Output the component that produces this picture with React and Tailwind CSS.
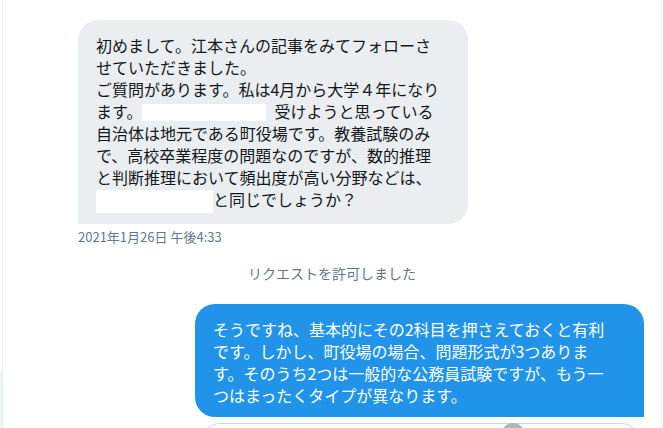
const FONT = { fontFamily: '"Noto Sans CJK JP", "Noto Sans", sans-serif' };

const received = [
  '初めまして。江本さんの記事をみてフォローさ',
  'せていただきました。',
  'ご質問があります。私は4月から大学４年になり',
];

const received2 = [
  '自治体は地元である町役場です。教養試験のみ',
  'で、高校卒業程度の問題なのですが、数的推理',
  'と判断推理において頻出度が高い分野などは、',
];

const sent = [
  'そうですね、基本的にその2科目を押さえておくと有利',
  'です。しかし、町役場の場合、問題形式が3つありま',
  'す。そのうち2つは一般的な公務員試験ですが、もう一',
  'つはまったくタイプが異なります。',
];

function Line({ children }) {
  return <div className="whitespace-nowrap h-[22px] leading-[22px]">{children}</div>;
}

export default function App() {
  return (
    <div className="flex w-[663px] h-[428px] overflow-hidden bg-white" style={FONT}>
      <div className="w-[2px] flex flex-col">
        <div className="flex-1" />
        <div className="h-[56px] bg-[#f3f5f7]" />
      </div>
      <div className="flex-1 flex flex-col border-l border-r border-[#e6ecf0] min-w-0">
        <div className="mt-[2px] ml-[17px] mr-[19px] h-px bg-[#e3e8ec] shadow-[0_1px_1px_rgba(0,0,0,0.06)]" />

        <div className="mt-[18px] ml-[75px] w-[390px] bg-[#eaeef1] rounded-[20px] rounded-bl-none pl-[18px] pt-[14px] pb-[14px] text-[16px] text-[#14171a]">
          {received.map((t) => <Line key={t}>{t}</Line>)}
          <Line>
            ます。
            <span className="inline-block align-middle w-[124px] h-[17px] bg-white mr-[8px] -mt-[2px]" />
            受けようと思っている
          </Line>
          {received2.map((t) => <Line key={t}>{t}</Line>)}
          <Line>
            <span className="inline-block align-middle w-[117px] h-[23px] bg-white -mt-[1px]" />
            と同じでしょうか？
          </Line>
        </div>
        <div className="ml-[75px] mt-[5px] text-[13px] leading-[16px] text-[#657786] whitespace-nowrap">
          2021年1月26日 午後4:33
        </div>

        <div className="mt-[19px] text-center text-[14px] leading-[18px] text-[#657786]">
          リクエストを許可しました
        </div>

        <div className="mt-[22px] self-end mr-[17px] w-[449px] bg-[#2194e9] rounded-[20px] rounded-br-none pl-[18px] pt-[14px] pb-[11px] text-[16px] text-white">
          {sent.map((t) => <Line key={t}>{t}</Line>)}
        </div>

        <div className="mt-[6px] self-end mr-[20px] w-[441px] h-[40px] shrink-0 rounded-full border border-[#ccd6dd] flex justify-start">
          <div className="ml-[300px] -mt-px w-[24px] h-[24px] rounded-full bg-[#aab8c2]" />
        </div>
      </div>
      <div className="w-px" />
    </div>
  );
}
